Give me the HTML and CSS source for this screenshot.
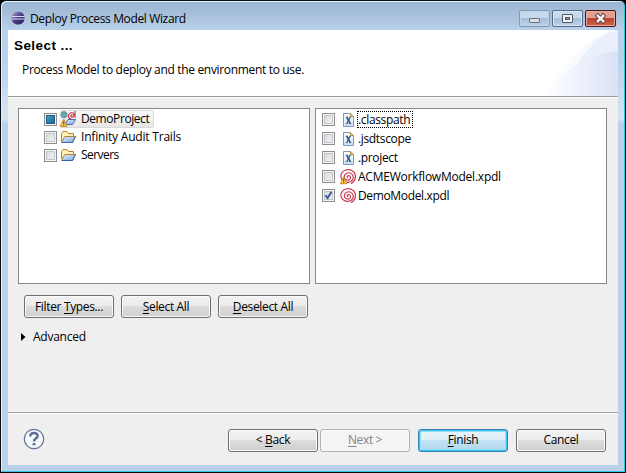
FILE: index.html
```
<!DOCTYPE html>
<html lang="en">
<head>
<meta charset="utf-8">
<title>Deploy Process Model Wizard</title>
<link rel="stylesheet" href="styles.css">
</head>
<body>
<svg class="defs" width="0" height="0" aria-hidden="true">
  <defs>
    <linearGradient id="ball" x1="0" y1="0" x2="1" y2="1"><stop offset="0" stop-color="#c0a8da"/><stop offset=".5" stop-color="#493d86"/><stop offset="1" stop-color="#251e53"/></linearGradient>
    <linearGradient id="folderFill" x1="0" y1="0" x2="1" y2="1"><stop offset="0" stop-color="#e9f3ff"/><stop offset="1" stop-color="#75a5e3"/></linearGradient>
    <linearGradient id="page" x1="0" y1="0" x2="0" y2="1"><stop offset="0" stop-color="#fff"/><stop offset="1" stop-color="#cfe4f8"/></linearGradient>
    <linearGradient id="arcOne" x1="0" y1="0" x2="1" y2="0"><stop offset="0" stop-color="#fff"/><stop offset=".5" stop-color="#f8faff"/><stop offset="1" stop-color="#eaf0fb"/></linearGradient>
    <linearGradient id="arcTwo" x1="0" y1="0" x2="1" y2="0"><stop offset="0" stop-color="#fff"/><stop offset=".4" stop-color="#f0f4fd"/><stop offset="1" stop-color="#dbe2f6"/></linearGradient>
    <symbol id="folder" viewBox="0 0 16 16">
      <path d="M1.5 12V4.5L3 2.5h4l1.5 2h5V7" fill="#fff0b5" stroke="#b98224"/>
      <path d="M1.5 13.5 4.8 7.5h10.7l-3 6z" fill="url(#folderFill)" stroke="#ad8040"/>
      <path d="M2 13.5h10.5l3-6" fill="none" stroke="#365fb0"/>
    </symbol>
    <symbol id="warning" viewBox="0 0 8 9">
      <path d="M4 .7 7.6 8.4H.4z" fill="#ffcf55" stroke="#c98516" stroke-linejoin="round"/>
      <path d="M4 3v3M4 6.8v1" stroke="#59380b"/>
    </symbol>
    <symbol id="xfile" viewBox="0 0 16 16">
      <path d="M3.5 1.5h7l3 3v10h-10z" fill="url(#page)" stroke="#7f97c0"/>
      <path d="M10.5 1.5v3h3z" fill="#e7c16a" stroke="#c19b45"/>
      <path d="M6.8 5.2 10.2 11.6" stroke="#2f5787" stroke-width="1.8"/>
      <path d="M10.2 5.2 6.8 11.6" stroke="#2f5787" stroke-width="1.1"/>
      <path d="M5.7 5.2h2.2M9.2 5.2h2M5.7 11.7h2M9 11.7h2.3" stroke="#2f5787" stroke-width=".8"/>
    </symbol>
    <symbol id="spiral" viewBox="0 0 16 16">
      <path d="M7.6 8.6C6.6 7.4 8 6.2 9.3 6.8c1.9.9 1.5 3.5-.5 4.1-2.6.8-5-1.4-4.4-4C5 4.200 7.800 3.300 10 4c2.900.9 4 4 2.700 6.500-1.600 3-5.600 3.600-8.500 2C.9 10.800.1 7 1.700 4.200 3.600 1 8-.1 11.400 1.300c2 .9 3.400 2.500 3.900 4.700.5 3-1 6.500-4 8.400" fill="none" stroke="#cd3550" stroke-width="1.2" stroke-linecap="round"/>
    </symbol>
  </defs>
</svg>
<div class="window">
  <header class="titlebar">
    <svg class="logo" width="14" height="14" viewBox="0 0 14 14"><circle cx="7" cy="7" r="6.6" fill="url(#ball)"/><path d="M1 5.500h12.400M.5 8h13" stroke="#dad9f5" stroke-width="1"/></svg>
    <h1><span class="t-title">Deploy Process Model Wizard</span></h1>
    <div class="controls">
      <span class="control dim"><svg width="29" height="15" viewBox="0 0 29 15"><rect x="9.5" y="7.500" width="10" height="4" rx=".5" fill="#e0dedc" stroke="#6c7480"/></svg></span>
      <span class="control"><svg width="29" height="15" viewBox="0 0 29 15"><rect x="9.5" y="3.500" width="10" height="8" rx=".5" fill="#f5f5f5" stroke="#4e5361"/><rect x="12.500" y="6.500" width="4" height="2" fill="#91aacb" stroke="#4e5361"/></svg></span>
      <span class="control close"><svg width="29" height="15" viewBox="0 0 29 15"><path d="m11.800 4.800 5.400 5.400M17.200 4.800l-5.400 5.400" stroke="#593e46" stroke-width="4.300" stroke-linecap="square"/><path d="m11.800 4.800 5.400 5.400M17.200 4.800l-5.400 5.400" stroke="#f4f4f4" stroke-width="2.500" stroke-linecap="square"/></svg></span>
    </div>
  </header>
  <main class="client">
    <section class="banner">
      <div>
        <h2><span class="t-select">Select ...</span></h2>
        <p><span class="t-desc">Process Model to deploy and the environment to use.</span></p>
      </div>
      <svg class="swoosh" width="74" height="66" viewBox="0 0 74 66"><path d="M0 66C15 36 41 7 74 0V66z" fill="url(#arcOne)"/><path d="M34 34C44 18 56 6 74 0V22C58 23 46 27 34 34z" fill="#e9effb"/><path d="M0 66C17 42 42 23 74 21V66z" fill="url(#arcTwo)"/></svg>
    </section>
    <section class="body">
      <div class="lists">
        <ul class="list tree">
          <li><span class="check mixed"></span>
            <span class="selected"><svg class="icon" width="16" height="16" viewBox="0 0 16 16"><path d="M5 13.500 8 8.500h7.500l-3 5z" fill="url(#folderFill)" stroke="#3f70bc"/><circle cx="4" cy="3.700" r="3.200" fill="#6fa8c6" stroke="#557e8c" stroke-width=".7"/><path d="M2 1.800 4 1l1 2-2 1zM4 5l2-1-1 2z" fill="#68a957"/><path d="M12.500 4c-1.500-.7-2.300 1.500-1 2 1.700.5 2.700-1.300 2.300-3C12.500.500 8.800 1.500 8.500 4.500c-.2 2 1 3.500 3 3.800M15 0v7" fill="none" stroke="#ca2942" stroke-width="1.100"/><use href="#warning" x="0" y="7.500" width="7.500" height="8.500"/></svg><span class="t-demo">DemoProject</span></span></li>
          <li><span class="check"></span><svg class="icon" width="16" height="16"><use href="#folder"/></svg><span class="t-infinity">Infinity Audit Trails</span></li>
          <li><span class="check"></span><svg class="icon" width="16" height="16"><use href="#folder"/></svg><span class="t-servers">Servers</span></li>
        </ul>
        <ul class="list files">
          <li><span class="check"></span><svg class="icon" width="16" height="16"><use href="#xfile"/></svg><span class="focused"><span class="t-classpath">.classpath</span></span></li>
          <li><span class="check"></span><svg class="icon" width="16" height="16"><use href="#xfile"/></svg><span class="t-jsdt">.jsdtscope</span></li>
          <li><span class="check"></span><svg class="icon" width="16" height="16"><use href="#xfile"/></svg><span class="t-project">.project</span></li>
          <li><span class="check"></span><svg class="icon" width="16" height="16"><use href="#spiral"/><use href="#warning" x="0" y="7" width="7.500" height="8.500"/></svg><span class="t-acme">ACMEWorkflowModel.xpdl</span></li>
          <li><span class="check"><svg width="11" height="11" viewBox="0 0 11 11"><path d="M2.500 5.200 4.600 8 8.500 1.800" fill="none" stroke="#3f559c" stroke-width="1.900"/></svg></span><svg class="icon" width="16" height="16"><use href="#spiral"/></svg><span class="t-model">DemoModel.xpdl</span></li>
        </ul>
      </div>
      <div class="actions">
        <button><span class="t-filter">Filter <u>T</u>ypes...</span></button>
        <button><span class="t-all"><u>S</u>elect All</span></button>
        <button><span class="t-none"><u>D</u>eselect All</span></button>
      </div>
      <div class="advanced"><svg width="5" height="8" viewBox="0 0 5 8"><path d="M0 0 4.500 4 0 8z"/></svg><span class="t-adv">Advanced</span></div>
    </section>
    <footer class="footer">
      <svg class="help" width="22" height="22" viewBox="0 0 22 22"><circle cx="11" cy="11" r="9.700" fill="#f6f8fb" stroke="#5f7598" stroke-width="1.200"/><path d="M7.200 8.600C7.200 3.800 15 4 14.600 8.200c-.2 2.500-3.600 2.400-3.600 5.200" fill="none" stroke="#5b7196" stroke-width="2.500"/><path d="M9.600 15h2.800v2.400H9.600z" fill="#5b7196"/></svg>
      <div class="nav">
        <button><span class="t-back">&lt; <u>B</u>ack</span></button>
        <button class="off" disabled><span class="t-next"><u>N</u>ext &gt;</span></button>
      </div>
      <button class="primary"><span class="t-finish"><u>F</u>inish</span></button>
      <button><span class="t-cancel">Cancel</span></button>
    </footer>
  </main>
</div>
</body>
</html>
```
FILE: styles.css
```
* { box-sizing: border-box; }
body { margin: 0; background: #000; font: 12px/18px "Open Sans", "Noto Sans", sans-serif; color: #000; overflow: hidden; }
h1, h2, p, ul { margin: 0; padding: 0; font-weight: normal; }
svg { display: block; flex: none; }
.defs { position: absolute; }
span[class^="t-"] { display: inline-block; white-space: nowrap; letter-spacing: -.35px; }
span.t-title { letter-spacing: -.36px; }
span.t-desc { letter-spacing: -.33px; }
span.t-select { letter-spacing: .42px; }
span.t-infinity { letter-spacing: -.2px; }
span.t-demo { letter-spacing: -.42px; }
span.t-servers { letter-spacing: -.55px; }
span.t-acme { letter-spacing: -.23px; }
span.t-adv { letter-spacing: -.25px; }
.window { height: 473px; border: 1px solid #090b10; border-radius: 6px 6px 0 0; padding: 0 6px 6px; background: linear-gradient(#9ab3cf, #b9d1ea 30px, #b9d1ea 60px, #d6e4f3 118px, #b9d1ea 122px); box-shadow: inset -1px -1px #33c5e5, inset 1px 1px #e1f1fc; }
.titlebar { height: 29px; display: flex; align-items: center; padding: 5px 2px 0 4px; }
.logo { margin-top: 0; }
.titlebar h1 { font-size: 12px; margin: 1px 0 0 5px; flex: 1; }
.controls { display: flex; gap: 2px; margin: 0 1px 0 0; }
.control { width: 31px; height: 17px; border: 1px solid #536987; border-radius: 2px; background: linear-gradient(#c7d9ec 48%, #a5bdd9 50%, #bdd3ea); box-shadow: inset 0 0 0 1px #d8e6f4; }
.dim { border-color: #8299b4; box-shadow: inset 0 0 0 1px #c2d4e7; }
.close { border-color: #4a1720; background: linear-gradient(#e2a093 45%, #bb442f 50%, #d1624a); box-shadow: inset 0 0 0 1px #e8a99e; }
.client { height: 435px; margin: 0 0 0 1px; width: 610px; background: #efefef; display: flex; flex-direction: column; }
.banner { height: 68px; background: #fff; border-bottom: 1px solid #fff; box-shadow: inset 0 -1px #9b9b9b; display: flex; justify-content: space-between; }
.banner h2 { font: bold 13.500px/18px "Liberation Sans", sans-serif; padding: 7px 0 0 6px; }
.banner p { padding: 6px 0 0 14px; }
.body { flex: 1; padding: 10px 11px 0 10px; }
.lists { display: grid; grid-template-columns: 292px 292px; gap: 5px; height: 176px; }
.list { list-style: none; background: #fff; border: 1px solid #828790; }
.list li { display: flex; align-items: center; }
.tree { padding: 1px 0 0 25px; }
.tree li { height: 18px; }
.files { padding: 1px 0 0 6px; }
.files li { height: 19.1px; }
.check { width: 13px; height: 13px; flex: none; border: 1px solid #8e8f8f; background: linear-gradient(135deg, #d4d7db, #f6f6f6); background-clip: padding-box; box-shadow: inset 0 0 0 1px #f4f4f4, inset 0 0 0 2px #c3c7cb; }
.mixed { background: linear-gradient(135deg, #4fb3d7, #125583); box-shadow: inset 0 0 0 1px #f4f4f4, inset 0 0 0 2px #235d84; }
.tree .icon { margin: 0 5px 0 3px; }
.selected { display: flex; align-items: center; height: 18px; width: 95px; margin-left: 2px; border: 1px solid #d9d9d9; border-left-color: #eee; border-radius: 3px; background: linear-gradient(#fafafa, #e6e6e6); }
.selected .icon { margin-left: 0; }
.files .icon { margin: 0 2px 0 5px; }
.focused { height: 17px; line-height: 15px; width: 56px; border: 1px dotted #000; margin-left: -1px; }
.focused span { line-height: 15px; }
.actions { display: flex; gap: 7px; padding: 11px 0 0 6px; }
button { width: 90px; height: 23px; padding: 0; border: 1px solid #707070; border-radius: 3px; background: linear-gradient(#f2f2f2, #ebebeb 48%, #dddddd 50%, #cfcfcf); box-shadow: inset 0 0 0 1px #fafafa; color: #000; font: inherit; line-height: 18px; text-align: center; }
u { text-decoration: underline; text-underline-offset: 2px; text-decoration-skip-ink: none; }
.advanced { display: flex; align-items: center; gap: 7px; padding: 10px 0 0 3px; }
.footer { height: 53px; border-top: 1px solid #a0a0a0; box-shadow: inset 0 1px #fff; display: flex; align-items: center; gap: 8px; padding: 2px 12px 0 15px; }
.help { margin-right: auto; margin-top: -3px; }
.nav { display: flex; gap: 2px; }
.off { color: #838383; border-color: #adb2b5; background: #f4f4f4; }
.primary { border-color: #3c7fb1; background: linear-gradient(#e9f4fb, #dceffa 48%, #c2e2f4 50%, #b0d7ec); box-shadow: inset 0 0 0 1px #3bc6f2, inset 0 0 0 2px #91e0f8; }
```
